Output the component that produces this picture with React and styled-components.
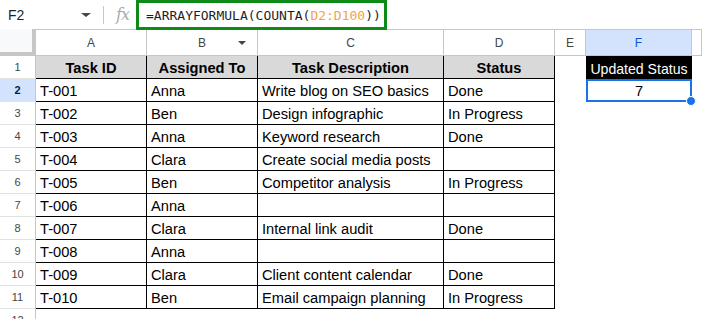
import styled, { createGlobalStyle } from 'styled-components';

const GlobalStyle = createGlobalStyle`
  html, body {
    margin: 0;
    padding: 0;
    background: #ffffff;
  }
  body {
    font-family: "Liberation Sans", Arial, sans-serif;
    overflow: hidden;
  }
`;

const Page = styled.div`
  width: 702px;
  height: 319px;
  overflow: hidden;
  background: #ffffff;
`;

const FormulaBar = styled.div`
  display: flex;
  align-items: stretch;
  height: 29px;
  border-bottom: 1px solid #c4c7c5;
`;

const NameBox = styled.div`
  flex: 0 0 73px;
  display: flex;
  align-items: center;
  padding-left: 8px;
  font-size: 14px;
  color: #1f1f1f;
`;

const Caret = styled.span`
  align-self: center;
  width: 0;
  height: 0;
  border-left: ${(p) => p.size}px solid transparent;
  border-right: ${(p) => p.size}px solid transparent;
  border-top: ${(p) => Math.round(p.size * 0.8)}px solid #444746;
`;

const Divider = styled.span`
  align-self: center;
  width: 1px;
  height: 18px;
  background: #c4c7c5;
  margin-left: 12px;
`;

const Fx = styled.span`
  align-self: center;
  margin-left: 12px;
  width: 18px;
  font-family: "DejaVu Serif", "Liberation Serif", serif;
  font-style: italic;
  font-size: 16px;
  color: #a8abb0;
  letter-spacing: -1px;
`;

const FormulaBox = styled.div`
  box-sizing: border-box;
  margin-left: 2px;
  width: 251px;
  height: 30px;
  margin-bottom: -1px;
  border: 3px solid #0e8a16;
  display: flex;
  align-items: center;
  padding-left: 7px;
  font-family: "DejaVu Sans Mono", "Liberation Mono", monospace;
  font-size: 13px;
  color: #1f1f1f;
  white-space: nowrap;
  position: relative;
  z-index: 1;
`;

const RangeRef = styled.span`
  color: #f4a24c;
`;

const Grid = styled.div`
  display: grid;
  grid-template-columns: 36px 111px 111px 186px 111px 31px 106px 1fr;
  grid-template-rows: 26px repeat(13, 23px);
`;

const Corner = styled.div`
  box-sizing: border-box;
  background: #f8f9fa;
  border-right: 4px solid #c4c7c5;
  border-bottom: 4px solid #c4c7c5;
  margin-top: -1px;
`;

const ColHead = styled.div`
  box-sizing: border-box;
  position: relative;
  display: flex;
  align-items: center;
  justify-content: center;
  font-size: 12px;
  border-right: 1px solid #c4c7c5;
  border-bottom: 1px solid #c4c7c5;
  background: ${(p) => (p.active ? '#d3e3fd' : '#ffffff')};
  color: ${(p) => (p.active ? '#0b57d0' : '#444746')};
`;

const HeadCaret = styled.span`
  position: absolute;
  right: 11px;
  top: 11px;
  width: 0;
  height: 0;
  border-left: 4px solid transparent;
  border-right: 4px solid transparent;
  border-top: 4px solid #444746;
`;

const RowHead = styled.div`
  box-sizing: border-box;
  display: flex;
  align-items: center;
  justify-content: center;
  font-size: 11px;
  border-right: 1px solid #c4c7c5;
  border-bottom: 1px solid #e1e3e1;
  background: ${(p) => (p.active ? '#d3e3fd' : '#ffffff')};
  color: ${(p) => (p.active ? '#041e49' : '#444746')};
  font-weight: ${(p) => (p.active ? 700 : 400)};
`;

const Cell = styled.div`
  box-sizing: border-box;
  display: flex;
  align-items: flex-end;
  justify-content: ${(p) => (p.center ? 'center' : 'flex-start')};
  padding: 0 4px 2px;
  font-size: 14.67px;
  color: #000000;
  white-space: nowrap;
  overflow: hidden;
  font-weight: ${(p) => (p.bold ? 700 : 400)};
  background: ${(p) => (p.header ? '#d9d9d9' : 'transparent')};
  border-right: 1px solid ${(p) => (p.framed ? '#000000' : 'transparent')};
  border-bottom: 1px solid ${(p) => (p.framed ? '#000000' : 'transparent')};
`;

const DarkCell = styled.div`
  box-sizing: border-box;
  display: flex;
  align-items: flex-end;
  justify-content: center;
  padding-bottom: 2px;
  background: #000000;
  color: #ffffff;
  font-size: 14.1px;
  white-space: nowrap;
  overflow: hidden;
`;

const SelectedCell = styled.div`
  box-sizing: border-box;
  position: relative;
  display: flex;
  align-items: flex-end;
  justify-content: center;
  padding-bottom: 1px;
  border: 2px solid #1a73e8;
  font-size: 14.67px;
  color: #000000;
`;

const Handle = styled.span`
  position: absolute;
  right: -6px;
  bottom: -6px;
  width: 8px;
  height: 8px;
  border-radius: 50%;
  background: #1a73e8;
  border: 1px solid #ffffff;
`;

const Blank = styled.div``;

const columns = ['A', 'B', 'C', 'D', 'E', 'F', ''];

const headers = ['Task ID', 'Assigned To', 'Task Description', 'Status'];

const rows = [
  ['T-001', 'Anna', 'Write blog on SEO basics', 'Done'],
  ['T-002', 'Ben', 'Design infographic', 'In Progress'],
  ['T-003', 'Anna', 'Keyword research', 'Done'],
  ['T-004', 'Clara', 'Create social media posts', ''],
  ['T-005', 'Ben', 'Competitor analysis', 'In Progress'],
  ['T-006', 'Anna', '', ''],
  ['T-007', 'Clara', 'Internal link audit', 'Done'],
  ['T-008', 'Anna', '', ''],
  ['T-009', 'Clara', 'Client content calendar', 'Done'],
  ['T-010', 'Ben', 'Email campaign planning', 'In Progress'],
];

const extraCells = (rowNum) => {
  if (rowNum === 1) {
    return [<Cell key="e" />, <DarkCell key="f">Updated Status</DarkCell>, <Cell key="g" />];
  }
  if (rowNum === 2) {
    return [
      <Cell key="e" />,
      <SelectedCell key="f">
        7
        <Handle />
      </SelectedCell>,
      <Cell key="g" />,
    ];
  }
  return [<Cell key="e" />, <Cell key="f" />, <Cell key="g" />];
};

const App = () => {
  return (
    <Page>
      <GlobalStyle />
      <FormulaBar>
        <NameBox>F2</NameBox>
        <Caret size={5} />
        <Divider />
        <Fx>fx</Fx>
        <FormulaBox>
          =ARRAYFORMULA(COUNTA(<RangeRef>D2:D100</RangeRef>))
        </FormulaBox>
      </FormulaBar>
      <Grid>
        <Corner />
        {columns.map((c) => (
          <ColHead key={c || 'G'} active={c === 'F'}>
            {c}
            {c === 'B' && <HeadCaret />}
          </ColHead>
        ))}

        <RowHead>1</RowHead>
        {headers.map((h) => (
          <Cell key={h} header bold center framed>
            {h}
          </Cell>
        ))}
        {extraCells(1)}

        {rows.map((r, i) => {
          const rowNum = i + 2;
          return [
            <RowHead key={`h${rowNum}`} active={rowNum === 2}>
              {rowNum}
            </RowHead>,
            ...r.map((v, j) => (
              <Cell key={`${rowNum}-${j}`} framed>
                {v}
              </Cell>
            )),
            ...extraCells(rowNum).map((el) => ({ ...el, key: `${rowNum}-${el.key}` })),
          ];
        })}

        {[12, 13].map((n) => [
          <RowHead key={`h${n}`}>{n}</RowHead>,
          ...columns.map((c) => <Blank key={`${n}${c || 'G'}`} />),
        ])}
      </Grid>
    </Page>
  );
};

export default App;
